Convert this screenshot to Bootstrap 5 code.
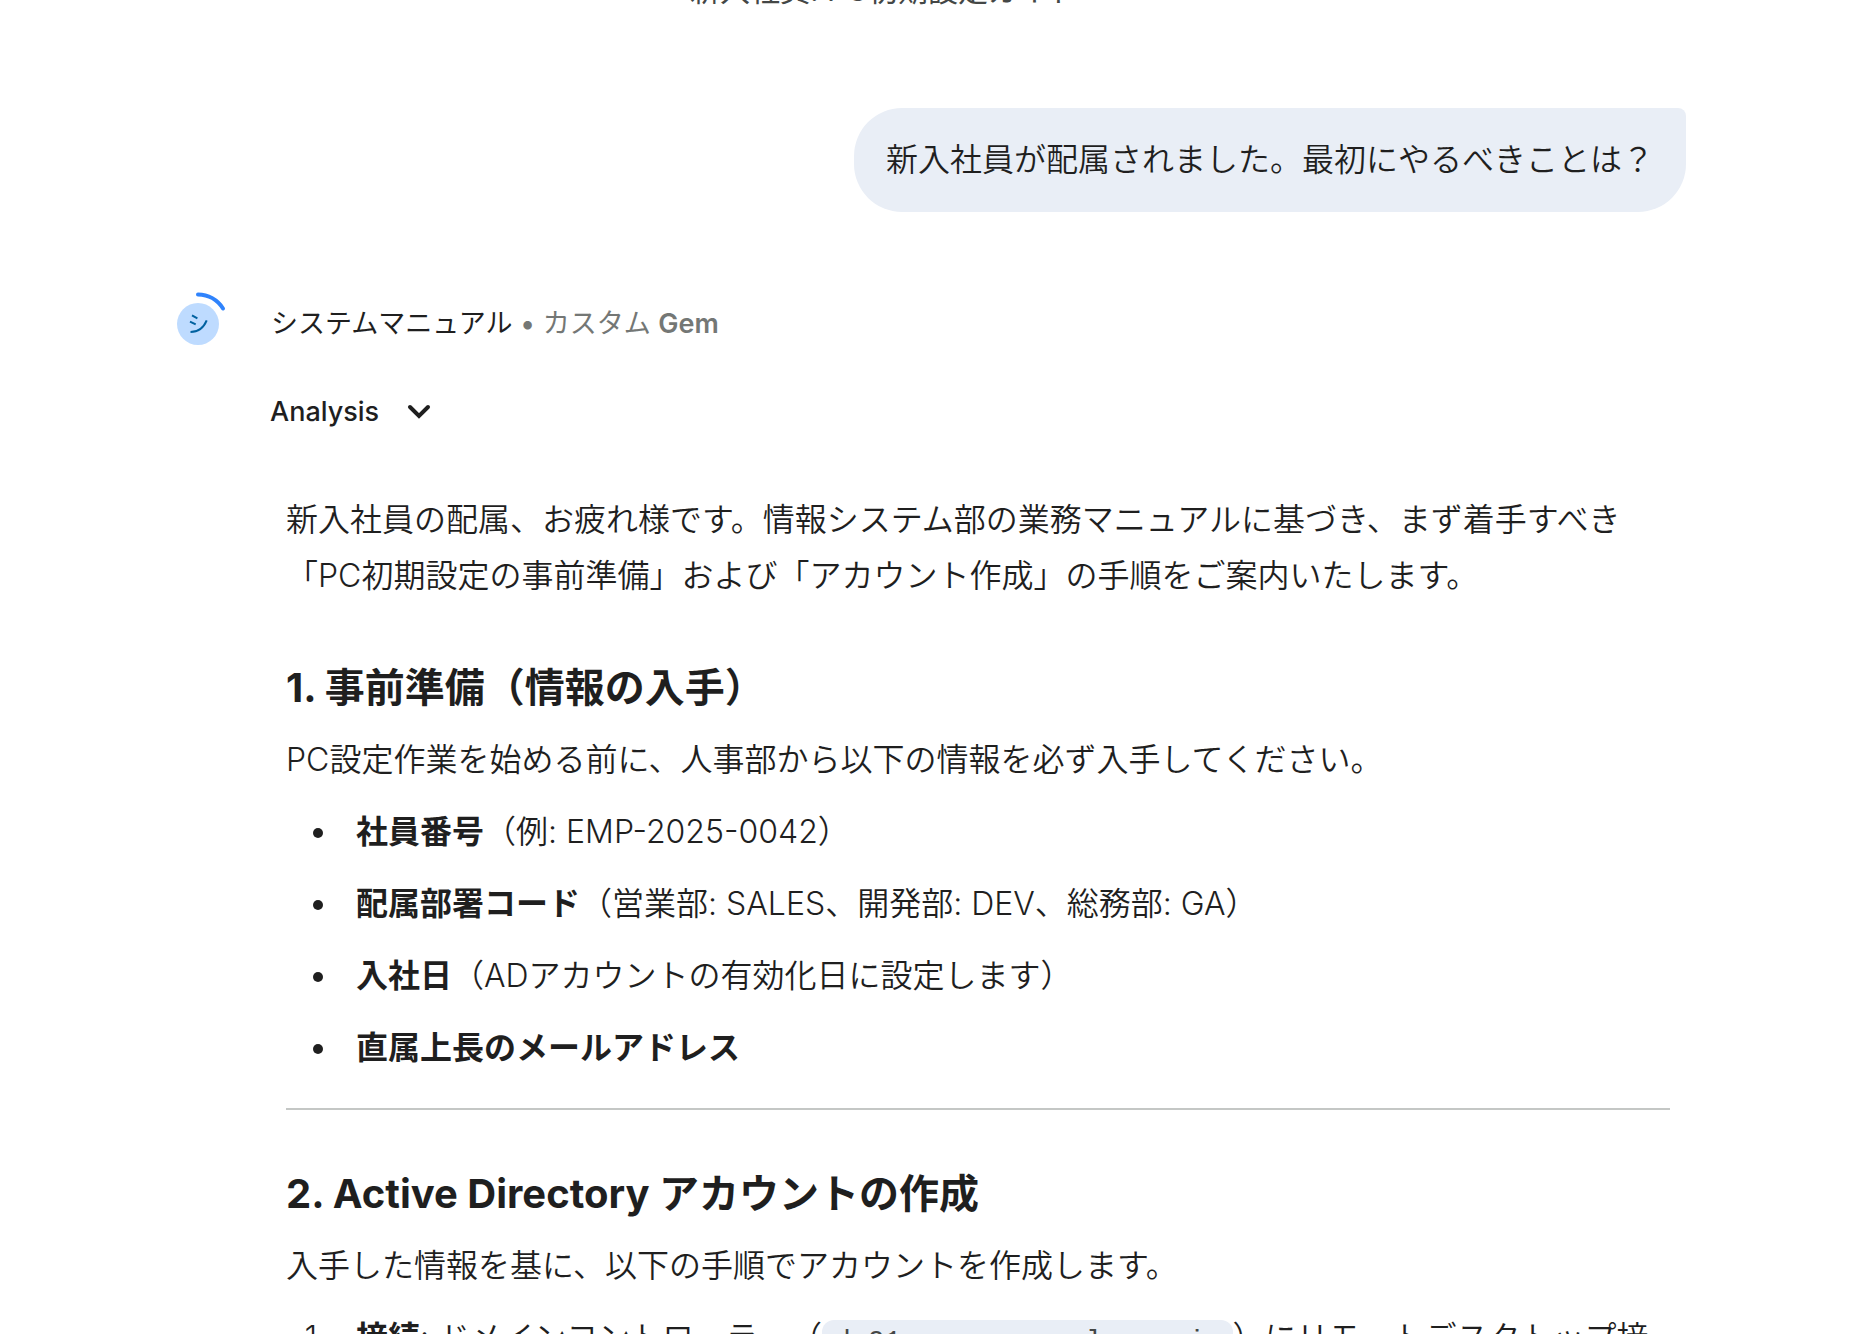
<!DOCTYPE html>
<html lang="ja">
<head>
<meta charset="utf-8">
<meta name="viewport" content="width=device-width, initial-scale=1">
<title>システムマニュアル</title>
<link href="https://cdn.jsdelivr.net/npm/bootstrap@5.3.0/dist/css/bootstrap.min.css" rel="stylesheet">
<style>
  body {
    font-family: Inter, "Noto Sans CJK JP", sans-serif;
    font-size: 32px;
    line-height: 56px;
    color: #1f1f1f;
    background: #fff;
    overflow-x: hidden;
  }
  .chat-page { padding-right: 24px; }
  .chat-column { max-width: 1520px; }
  .chat-text { font-weight: 350; }
  .chat-text strong { font-weight: 700; }
  .doc-title {
    height: 8px;
    padding-right: 84px;
    margin-bottom: 100px;
    font-size: 30px;
    line-height: 36px;
    color: #444746;
  }
  .user-bubble {
    padding: 24px 32px;
    margin-bottom: 80px;
    background: #e9eef6;
    border-radius: 48px 8px 48px 48px;
  }
  .reply-head { gap: 41px; font-size: 27px; line-height: 64px; }
  .reply-muted { color: #747775; }
  .gem-avatar { width: 64px; height: 64px; }
  .reply-body { padding: 0 16px 0 120px; }
  .analysis-toggle {
    gap: 24px;
    margin: 24px 0 48px -16px;
    padding: 8px 0;
    font-size: 27px;
    line-height: 48px;
    font-weight: 500;
    color: inherit;
  }
  .reply-body p { margin-bottom: 16px; }
  .reply-body h2 {
    margin: 56px 0 16px;
    font-size: 40px;
    line-height: 56px;
    font-weight: 700;
  }
  .reply-body ul, .reply-body ol { padding-left: 54px; margin-bottom: 0; }
  .reply-body li { padding-left: 16px; margin-bottom: 16px; }
  .reply-body hr { margin: 32px 0 55px; border-top: 2px solid #c4c7c5; opacity: 1; }
  .host-code {
    padding: 6px 12px;
    font-family: "Liberation Mono", monospace;
    font-size: 28px;
    color: #444746;
    background: #e9eef6;
    border-radius: 12px;
  }
</style>
<script src="https://cdn.jsdelivr.net/npm/bootstrap@5.3.0/dist/js/bootstrap.bundle.min.js"></script>
</head>
<body>
<div class="chat-page vh-100 overflow-hidden">
  <main class="chat-column mx-auto">
    <div class="doc-title d-flex justify-content-center align-items-end">新入社員: PC初期設定ガイド</div>

    <div class="d-flex justify-content-end">
      <div class="user-bubble chat-text">新入社員が配属されました。最初にやるべきことは？</div>
    </div>

    <section>
      <header class="reply-head d-flex align-items-center">
        <svg class="gem-avatar flex-shrink-0" viewBox="0 1 64 64" aria-hidden="true">
          <circle cx="32" cy="33" r="21" fill="#bedbff"/>
          <path d="M26 24.300l5.400 3M24 30.700l5.700 2.700M24.500 41C32 41 37.500 37 40.700 29.300" fill="none" stroke="#0061a0" stroke-width="2"/>
          <path d="M32 3.500A30 30 0 0 1 57 17.500" fill="none" stroke="#2f83fc" stroke-width="4" stroke-linecap="round"/>
        </svg>
        <div>システムマニュアル <span class="reply-muted">• カスタム <span class="fw-semibold">Gem</span></span></div>
      </header>

      <div class="reply-body">
        <button type="button" class="analysis-toggle btn border-0 d-flex align-items-center">
          Analysis
          <svg width="32" height="32" viewBox="0 0 32 32" fill="none" stroke="currentColor" stroke-width="4" stroke-linecap="round" stroke-linejoin="miter" aria-hidden="true"><path d="M7 11L16 20L25 11"/></svg>
        </button>

        <div class="chat-text">
          <p>新入社員の配属、お疲れ様です。情報システム部の業務マニュアルに基づき、まず着手すべき「PC初期設定の事前準備」および「アカウント作成」の手順をご案内いたします。</p>

          <h2>1. 事前準備（情報の入手）</h2>
          <p>PC設定作業を始める前に、人事部から以下の情報を必ず入手してください。</p>
          <ul>
            <li><strong>社員番号</strong>（例: EMP-2025-0042）</li>
            <li><strong>配属部署コード</strong>（営業部: SALES、開発部: DEV、総務部: GA）</li>
            <li><strong>入社日</strong>（ADアカウントの有効化日に設定します）</li>
            <li><strong>直属上長のメールアドレス</strong></li>
          </ul>
          <hr>

          <h2>2. Active Directory アカウントの作成</h2>
          <p>入手した情報を基に、以下の手順でアカウントを作成します。</p>
          <ol>
            <li><strong>接続</strong>: ドメインコントローラー（<code class="host-code">dc01.corp.example.co.jp</code>）にリモートデスクトップ接続します。</li>
          </ol>
        </div>
      </div>
    </section>
  </main>
</div>
</body>
</html>
